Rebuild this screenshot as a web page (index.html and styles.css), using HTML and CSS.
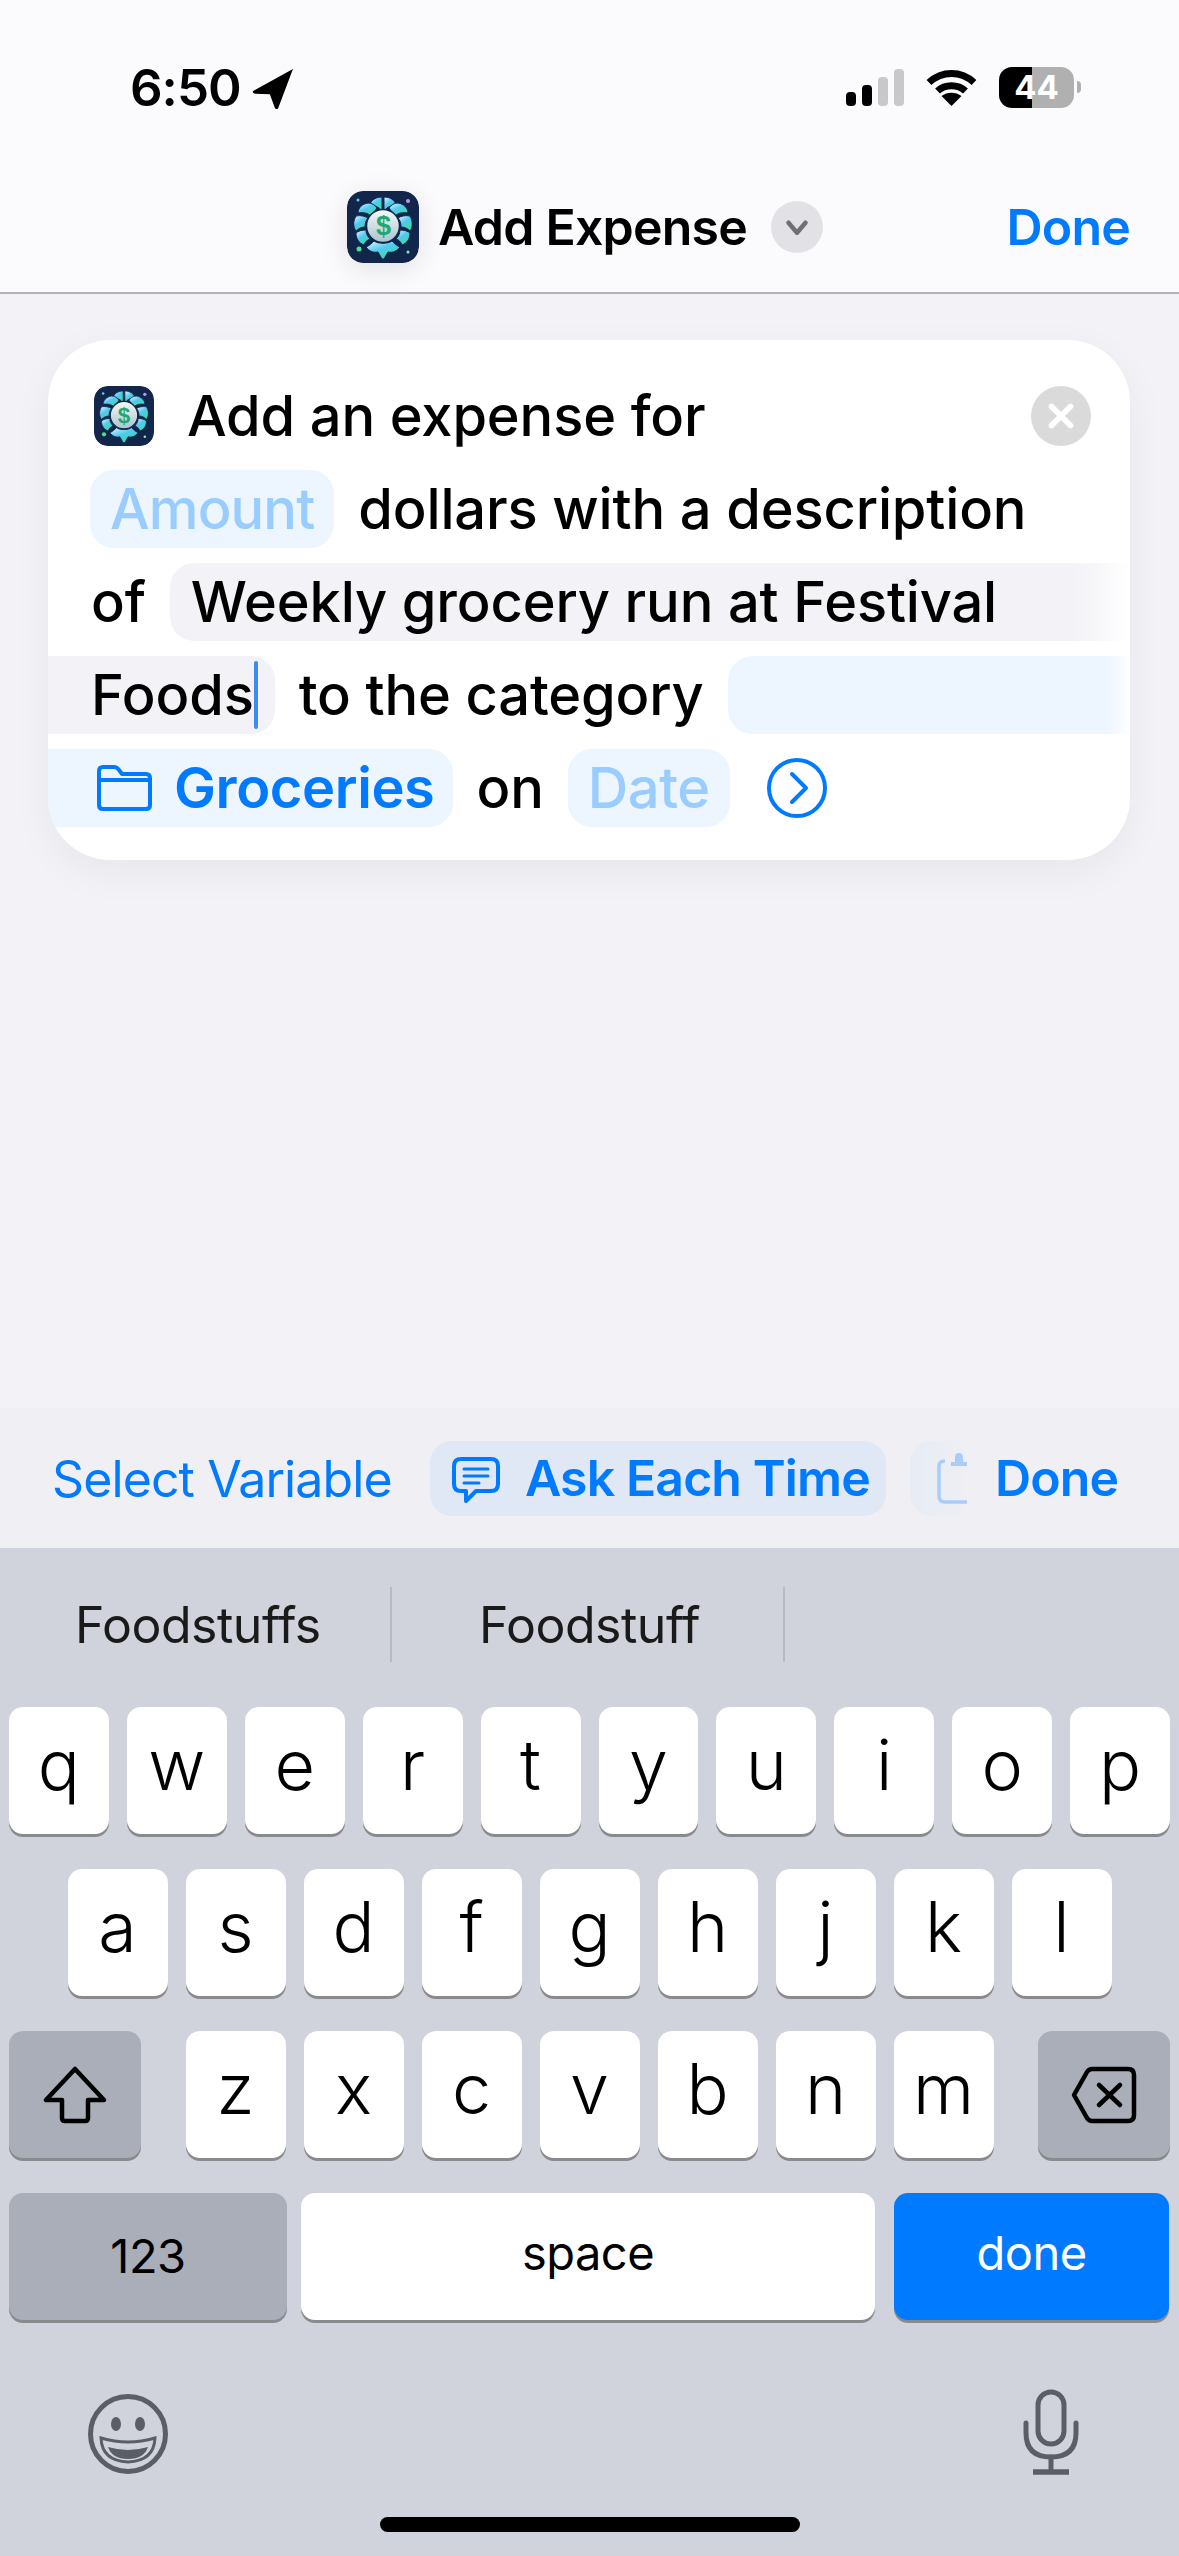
FILE: index.html
```html
<!DOCTYPE html>
<html>

<head>
    <meta charset="utf-8">
    <title>Add Expense</title>
    <link rel="stylesheet" href="styles.css">
</head>

<body>
    <svg class="defs" width="0" height="0">
        <defs>
            <linearGradient id="petal" x1="0.1" y1="0" x2="0.8" y2="1">
                <stop offset="0" stop-color="#d8f6fb" />
                <stop offset="0.45" stop-color="#52c8f0" />
                <stop offset="1" stop-color="#38e08c" />
            </linearGradient>
            <linearGradient id="coin" x1="0" y1="0" x2="0" y2="1">
                <stop offset="0" stop-color="#f6f8f8" />
                <stop offset="1" stop-color="#a9c4cc" />
            </linearGradient>
            <symbol id="appIcon" viewBox="0 0 72 72">
                <rect width="72" height="72" rx="16" fill="#12264c" />
                <g fill="url(#petal)" stroke="#12264c" stroke-width="1">
                    <path d="M35 6c-6 0-11 3-12 8 4 0 9 2 12 6z" />
                    <path d="M37 6c6 0 11 3 12 8-4 0-9 2-12 6z" />
                    <path d="M21 12c-6 1-10 5-10 10 5-1 10 0 13 3l6-8c-2-3-5-5-9-5z" />
                    <path d="M51 12c6 1 10 5 10 10-5-1-10 0-13 3l-6-8c2-3 5-5 9-5z" />
                    <path d="M9 25c-3 5-3 11 0 15 3-3 6-4 9-4 0-4 1-7 3-9-3-2-8-3-12-2z" />
                    <path d="M63 25c3 5 3 11 0 15-3-3-6-4-9-4 0-4-1-7-3-9 3-2 8-3 12-2z" />
                    <path d="M9 42c0 6 3 10 8 12 1-3 3-5 6-6-2-2-4-5-4-9-4 0-8 1-10 3z" />
                    <path d="M63 42c0 6-3 10-8 12-1-3-3-5-6-6 2-2 4-5 4-9 4 0 8 1 10 3z" />
                    <path d="M19 56c3 4 7 6 12 5l4 7h2l4-7c5 1 9-1 12-5-3-1-6-4-8-6-4 3-14 3-18 0-2 2-5 5-8 6z" />
                </g>
                <circle cx="36" cy="35" r="16.5" fill="url(#coin)" stroke="#12264c" stroke-width="1.500" />
                <text class="dollar" x="36" y="44" text-anchor="middle">$</text>
                <circle cx="12" cy="58" r="2.5" fill="#4be38e" />
                <circle cx="61" cy="10" r="2" fill="#b79af0" />
                <circle cx="11" cy="9" r="1.5" fill="#59d6ea" />
                <circle cx="61" cy="61" r="1.5" fill="#7df0c0" />
            </symbol>
        </defs>
    </svg>

    <header class="top">
        <div class="statusbar">
            <div class="clock">
                <span>6:50</span>
                <svg class="loc" viewBox="0 0 40 40"><path d="M39 1 L1 22 Q0 24 3 24.500 L17 25 L22 38.500 Q24 40 25 38 Z" /></svg>
            </div>
            <div class="status-icons">
                <div class="signal">
                    <span class="bar bar1"></span>
                    <span class="bar bar2"></span>
                    <span class="bar bar3"></span>
                    <span class="bar bar4"></span>
                </div>
                <svg class="wifi" viewBox="0 0 51 37" fill="none" stroke="#000" stroke-width="7">
                    <path d="M3 13.500 C16 1.500 35 1.500 48 13.500" />
                    <path d="M11.500 22 C19 15 32 15 39.500 22" />
                    <path fill="#000" stroke="none" d="M25.500 37 L15.500 27 C21 22.500 30 22.500 35.500 27 Z" />
                </svg>
                <div class="battery">44</div>
                <span class="battery-tip"></span>
            </div>
        </div>
        <div class="navbar">
            <svg class="nav-icon"><use href="#appIcon" /></svg>
            <span class="nav-title">Add Expense</span>
            <span class="nav-chevron">
                <svg viewBox="0 0 24 24" fill="none" stroke="#6f6f74" stroke-width="3.200" stroke-linecap="round" stroke-linejoin="round"><path d="M6 9 L12 16 L18 9" /></svg>
            </span>
            <span class="nav-done">Done</span>
        </div>
    </header>

    <main class="content">
        <div class="card">
            <div class="row">
                <svg class="action-icon"><use href="#appIcon" /></svg>
                <span class="first-word">Add an expense for</span>
                <span class="close-btn">
                    <svg viewBox="0 0 24 24" fill="none" stroke="#fff" stroke-width="3.600" stroke-linecap="round"><path d="M6 6 L18 18 M18 6 L6 18" /></svg>
                </span>
            </div>
            <div class="row">
                <span class="pill pill-blue placeholder amount">Amount</span>
                <span class="txt">dollars with a description</span>
            </div>
            <div class="row">
                <span class="txt">of</span>
                <span class="pill pill-grey pill-open">Weekly grocery run at Festival</span>
            </div>
            <div class="row">
                <span class="pill pill-grey pill-bleed">Foods<i class="caret"></i></span>
                <span class="txt">to the category</span>
                <span class="pill pill-blue pill-open"></span>
            </div>
            <div class="row">
                <span class="pill pill-blue pill-bleed groceries">
                    <svg class="folder" viewBox="0 0 55 46" fill="none" stroke="#007aff" stroke-width="4" stroke-linejoin="round">
                        <path d="M2 13 V6 Q2 2 6 2 H17 Q20 2 22 5 L25 9 H49 Q53 9 53 13 V40 Q53 44 49 44 H6 Q2 44 2 40 Z" />
                        <path d="M2 15 H53" />
                    </svg>
                    Groceries
                </span>
                <span class="txt">on</span>
                <span class="pill pill-blue placeholder date">Date</span>
                <svg class="more" viewBox="0 0 60 60" fill="none" stroke="#007aff" stroke-width="4" stroke-linecap="round" stroke-linejoin="round">
                    <circle cx="30" cy="30" r="28" />
                    <path d="M25 16 L39 30 L25 44" />
                </svg>
            </div>
        </div>
    </main>

    <div class="toolbar">
        <span class="tool-link">Select Variable</span>
        <span class="tool-pill">
            <svg class="bubble" viewBox="0 0 48 46" fill="none" stroke="#007aff" stroke-width="4" stroke-linejoin="round" stroke-linecap="round">
                <path d="M9 2 H39 Q46 2 46 9 V27 Q46 34 39 34 H24 L14 44 V34 H9 Q2 34 2 27 V9 Q2 2 9 2 Z" />
                <path d="M12 12 H36 M12 19 H36 M12 26 H27" stroke-width="3" />
            </svg>
            Ask Each Time
        </span>
        <span class="tool-next">
            <svg class="clip" viewBox="0 0 30 52" fill="none" stroke="#a9cdf8" stroke-width="3.500">
                <path d="M30 50 H8 Q2 50 2 44 V14 Q2 9 8 9" />
                <path d="M18 10 V5 Q18 1 22 1 Q26 1 26 5 V10 H30 V14 H14 V10 Z" fill="#a9cdf8" stroke="none" />
            </svg>
            <b>Done</b>
        </span>
    </div>

    <section class="keyboard">
        <div class="suggestions">
            <span class="sug sug1">Foodstuffs</span>
            <span class="sug sug2">Foodstuff</span>
        </div>
        <div class="keys">
            <div class="key-row">
                <span class="key">q</span><span class="key">w</span><span class="key">e</span><span class="key">r</span><span class="key">t</span><span class="key">y</span><span class="key">u</span><span class="key">i</span><span class="key">o</span><span class="key">p</span>
            </div>
            <div class="key-row">
                <span class="key">a</span><span class="key">s</span><span class="key">d</span><span class="key">f</span><span class="key">g</span><span class="key">h</span><span class="key">j</span><span class="key">k</span><span class="key">l</span>
            </div>
            <div class="key-row row-third">
                <span class="key key-fn key-side">
                    <svg class="shift" viewBox="0 0 64 58" fill="none" stroke="#000" stroke-width="4.500" stroke-linejoin="round">
                        <path d="M32 3 L3 34 H19 V52 Q19 55 22 55 H42 Q45 55 45 52 V34 H61 Z" />
                    </svg>
                </span>
                <div class="letters">
                    <span class="key">z</span><span class="key">x</span><span class="key">c</span><span class="key">v</span><span class="key">b</span><span class="key">n</span><span class="key">m</span>
                </div>
                <span class="key key-fn key-side">
                    <svg class="backspace" viewBox="0 0 66 58" fill="none" stroke="#000" stroke-width="4.500" stroke-linejoin="round" stroke-linecap="round">
                        <path d="M21 3 H57 Q63 3 63 9 V49 Q63 55 57 55 H21 Q18 55 16 52 L3 29 L16 6 Q18 3 21 3 Z" />
                        <path d="M28 19 L49 39 M49 19 L28 39" />
                    </svg>
                </span>
            </div>
            <div class="key-row row-last">
                <span class="key key-fn key-small key-num">123</span>
                <span class="key key-small key-space">space</span>
                <span class="key key-small key-done">done</span>
            </div>
        </div>
        <div class="kb-bottom">
            <svg class="emoji" viewBox="0 0 80 82" fill="none" stroke="#5a5e67" stroke-width="5">
                <circle cx="40" cy="41" r="37.500" />
                <ellipse cx="28" cy="31" rx="5" ry="7" fill="#5a5e67" stroke="none" />
                <ellipse cx="52" cy="31" rx="5" ry="7" fill="#5a5e67" stroke="none" />
                <path d="M13 45 Q40 53 67 45 Q66 68 40 69 Q14 68 13 45 Z" stroke-width="3" />
                <path d="M20 54 Q40 60 60 54 Q56 66 40 66 Q24 66 20 54 Z" fill="#5a5e67" stroke="none" />
            </svg>
            <svg class="mic" viewBox="0 0 56 86" fill="none" stroke="#5a5e67" stroke-width="5" stroke-linecap="round">
                <rect x="15" y="3" width="26" height="52" rx="13" />
                <path d="M3 34 V44 Q3 68 28 68 Q53 68 53 44 V34" />
                <path d="M28 68 V82" />
                <path d="M10 83 H46" stroke-linecap="butt" stroke-width="5.500" />
            </svg>
        </div>
        <div class="home-bar"></div>
    </section>
</body>

</html>
```

FILE: styles.css
```css
* {
    box-sizing: border-box;
}

html,
body {
    margin: 0;
    padding: 0;
}

body {
    width: 1179px;
    height: 2556px;
    display: flex;
    flex-direction: column;
    overflow: hidden;
    font-family: Inter, "Noto Sans", sans-serif;
    background-color: #f2f2f7;
    color: #000;
}

.defs {
    position: absolute;
}

.dollar {
    font-family: "Liberation Sans", sans-serif;
    font-size: 27px;
    font-weight: 700;
    fill: #1fa874;
}

/* Верхняя панель */
.top {
    height: 294px;
    flex: none;
    background-color: #fbfbfd;
    border-bottom: 2px solid #b4b4b8;
}

.statusbar {
    height: 190px;
    display: flex;
    justify-content: space-between;
    align-items: flex-start;
    padding: 62px 98px 0 130px;
}

.clock {
    display: flex;
    align-items: center;
    gap: 11px;
    font-size: 51px;
    font-weight: 600;
    letter-spacing: -1px;
    line-height: 52px;
}

.loc {
    width: 42px;
    height: 42px;
    margin-top: 1px;
}

.status-icons {
    display: flex;
    align-items: flex-end;
    padding-top: 5px;
}

.signal {
    display: flex;
    align-items: flex-end;
    gap: 6px;
    height: 37px;
    margin-right: 22px;
}

.bar {
    width: 10px;
    border-radius: 4px;
    background-color: #c8c8ca;
}

.bar1 {
    height: 14px;
    background-color: #000;
}

.bar2 {
    height: 21px;
    background-color: #000;
}

.bar3 {
    height: 29px;
}

.bar4 {
    height: 37px;
}

.wifi {
    width: 51px;
    height: 37px;
    margin-right: 22px;
}

.battery {
    width: 75px;
    height: 41px;
    margin-bottom: -2px;
    border-radius: 13px;
    background: linear-gradient(90deg, #000 44%, #b0b0b0 44%);
    color: #fff;
    font-size: 33px;
    font-weight: 700;
    line-height: 41px;
    text-align: center;
}

.battery-tip {
    width: 4px;
    height: 12px;
    margin: 0 0 13px 3px;
    border-radius: 0 4px 4px 0;
    background-color: #b0b0b0;
}

.navbar {
    height: 102px;
    display: flex;
    align-items: center;
    padding: 0 49px 28px 347px;
    font-size: 50px;
    font-weight: 600;
    letter-spacing: -0.8px;
}

.nav-icon {
    width: 72px;
    height: 72px;
    border-radius: 16px;
    box-shadow: 0 6px 28px rgba(0, 0, 0, 0.1);
}

.nav-title {
    margin-left: 19px;
}

.nav-chevron {
    width: 52px;
    height: 52px;
    margin-left: 24px;
    display: flex;
    align-items: center;
    justify-content: center;
    border-radius: 50%;
    background-color: #e2e2e6;
}

.nav-chevron svg {
    width: 34px;
    height: 34px;
}

.nav-done {
    margin-left: auto;
    color: #007aff;
}

/* Карточка действия */
.content {
    height: 1114px;
    flex: none;
    padding: 46px 49px 0 48px;
}

.card {
    height: 520px;
    padding: 37px 40px 33px 43px;
    display: flex;
    flex-direction: column;
    gap: 15px;
    overflow: hidden;
    background-color: #fff;
    border-radius: 62px;
    box-shadow: 0 12px 40px rgba(0, 0, 0, 0.05);
    font-size: 56px;
    font-weight: 500;
    letter-spacing: -0.15px;
}

.row {
    height: 78px;
    display: flex;
    align-items: center;
    white-space: nowrap;
}

.action-icon {
    width: 60px;
    height: 60px;
    margin-left: 3px;
    border-radius: 14px;
    flex: none;
}

.first-word {
    margin-left: 33px;
}

.close-btn {
    width: 60px;
    height: 60px;
    margin-left: auto;
    margin-right: -1px;
    display: flex;
    align-items: center;
    justify-content: center;
    border-radius: 50%;
    background-color: #dadada;
}

.close-btn svg {
    width: 38px;
    height: 38px;
}

.pill {
    height: 78px;
    display: flex;
    align-items: center;
    padding: 0 21px;
    border-radius: 24px;
}

.pill-blue {
    background-color: #edf5fe;
    color: #007aff;
    font-weight: 600;
    letter-spacing: -0.4px;
}

.pill-grey {
    background-color: #f2f2f7;
}

.placeholder {
    color: #99ccff;
    font-weight: 500;
    letter-spacing: 0;
}

.amount {
    padding: 0 20px;
    letter-spacing: -0.9px;
}

.date {
    padding: 0 20px;
    letter-spacing: -0.4px;
}

.txt {
    margin: 0 24px;
}

.row>.txt:first-child {
    margin-left: 0;
}

.row>.pill:first-child:not(.pill-bleed) {
    margin-left: -1px;
}

.pill-open {
    flex: 1;
    margin-right: -40px;
    border-radius: 24px 0 0 24px;
    -webkit-mask-image: linear-gradient(90deg, #000 94%, transparent);
    mask-image: linear-gradient(90deg, #000 94%, transparent);
}

.pill-bleed {
    margin-left: -43px;
    padding-left: 43px;
    border-radius: 0 24px 24px 0;
}

.caret {
    width: 4px;
    height: 68px;
    margin-right: -4px;
    border-radius: 2px;
    background-color: #3f8cf0;
}

.groceries {
    padding-left: 49px;
    padding-right: 18px;
}

.folder {
    width: 55px;
    height: 46px;
    margin-right: 22px;
}

.more {
    width: 60px;
    height: 60px;
    margin-left: 37px;
}

/* Панель переменных */
.toolbar {
    height: 140px;
    flex: none;
    display: flex;
    align-items: center;
    padding-left: 52px;
    overflow: hidden;
    background-color: #efeff4;
    color: #007aff;
    font-size: 50px;
    white-space: nowrap;
    letter-spacing: -0.9px;
}

.tool-link {
    width: 378px;
    padding-top: 2px;
}

.tool-pill {
    width: 456px;
    height: 75px;
    display: flex;
    align-items: center;
    padding-left: 22px;
    border-radius: 22px;
    background-color: #dfe8f4;
    font-weight: 600;
}

.bubble {
    width: 48px;
    height: 46px;
    margin: 4px 25px 0 0;
}

.tool-next {
    width: 240px;
    height: 75px;
    margin-left: 24px;
    display: flex;
    align-items: center;
    padding-left: 27px;
    border-radius: 22px 0 0 22px;
    background: linear-gradient(90deg, #e6ecf5 0, #efeff4 56px);
}

.tool-next b {
    font-weight: 600;
}

.clip {
    width: 30px;
    height: 52px;
    margin-right: 28px;
}

/* Клавиатура */
.keyboard {
    flex: 1;
    position: relative;
    background-color: #d0d3dc;
}

.suggestions {
    height: 159px;
    display: flex;
    align-items: flex-start;
    padding-top: 39px;
    font-size: 50px;
    color: #1a1a1a;
    letter-spacing: -0.5px;
}

.sug {
    height: 75px;
    display: flex;
    align-items: center;
    border-right: 2px solid #b7bac3;
}

.sug1 {
    width: 392px;
    padding-left: 75px;
}

.sug2 {
    width: 393px;
    padding-left: 87px;
}

.keys {
    padding: 0 9px;
    display: flex;
    flex-direction: column;
    gap: 33px;
}

.key-row {
    height: 129px;
    display: flex;
    justify-content: center;
    gap: 18px;
}

.key {
    width: 100px;
    height: 127px;
    display: flex;
    align-items: center;
    justify-content: center;
    padding-bottom: 12px;
    border-radius: 14px;
    background-color: #fff;
    box-shadow: 0 3px 0 #898a8e;
    font-size: 70px;
    font-weight: 300;
}

.row-third {
    justify-content: space-between;
}

.letters {
    display: flex;
    gap: 18px;
}

.key-fn {
    background-color: #a9aeb9;
}

.key-side {
    width: 132px;
    padding-bottom: 0;
}

.shift {
    width: 64px;
    height: 58px;
}

.backspace {
    width: 66px;
    height: 58px;
}

.row-last {
    gap: 14px;
    justify-content: flex-start;
}

.key-small {
    font-size: 47px;
    font-weight: 400;
    letter-spacing: -0.5px;
    padding-bottom: 9px;
}

.key-num {
    width: 278px;
    padding-bottom: 2px;
    padding-top: 0;
}

.key-space {
    width: 574px;
}

.key-done {
    width: 275px;
    margin-left: 5px;
    background-color: #007aff;
    color: #fff;
}

.kb-bottom {
    display: flex;
    justify-content: space-between;
    align-items: flex-end;
    padding: 67px 100px 0 88px;
}

.emoji {
    width: 80px;
    height: 82px;
}

.mic {
    width: 56px;
    height: 86px;
}

.home-bar {
    position: absolute;
    left: 380px;
    bottom: 24px;
    width: 420px;
    height: 15px;
    border-radius: 8px;
    background-color: #000;
}
```
